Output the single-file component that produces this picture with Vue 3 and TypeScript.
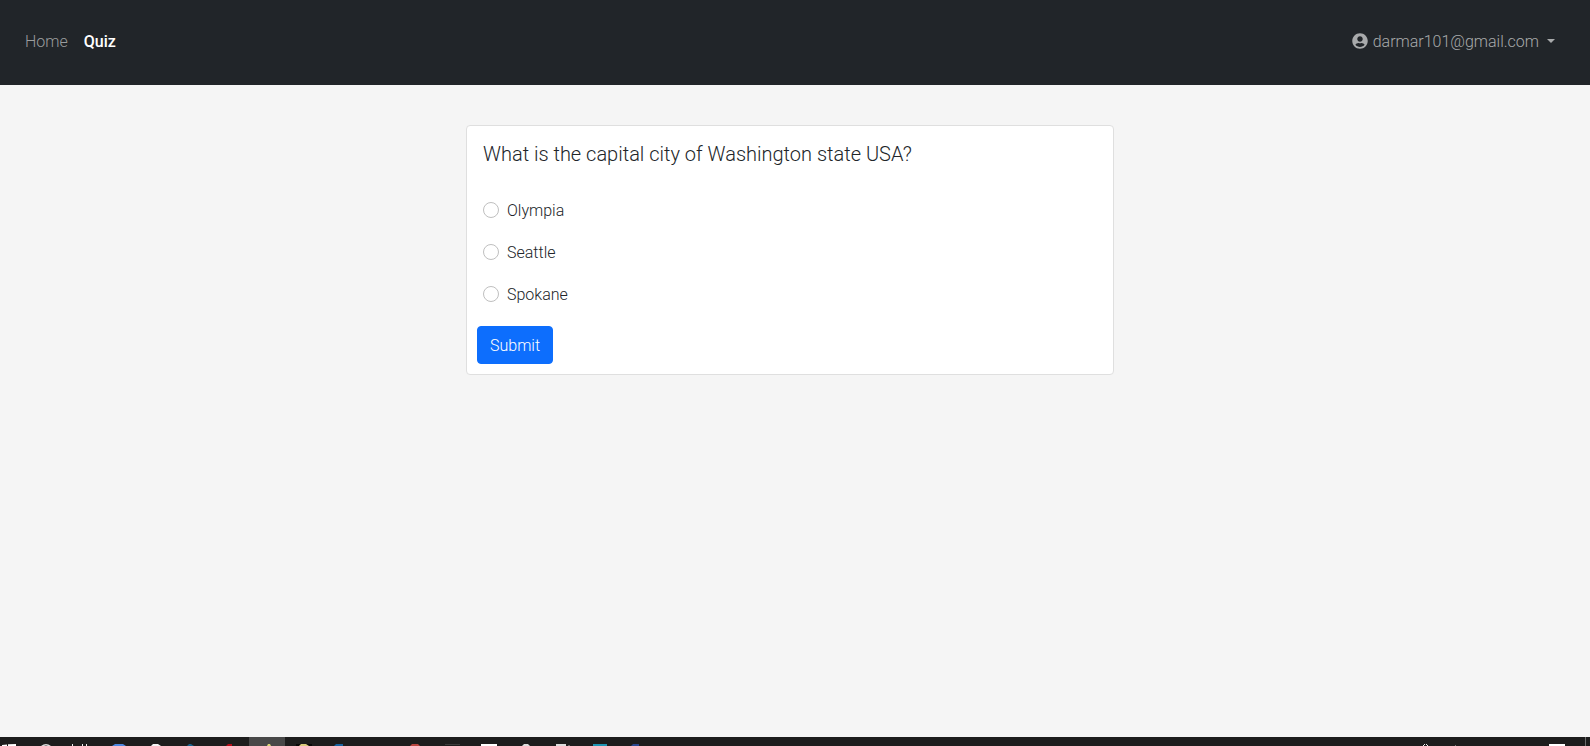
<script setup lang="ts">
import { ref } from 'vue'

interface Choice {
  id: string
  label: string
}

const question = 'What is the capital city of Washington state USA?'
const choices: Choice[] = [
  { id: 'olympia', label: 'Olympia' },
  { id: 'seattle', label: 'Seattle' },
  { id: 'spokane', label: 'Spokane' },
]
const selected = ref<string>('')
</script>

<template>
  <div class="page">
    <header class="navbar">
      <nav class="links">
        <a class="link" href="#home">Home</a>
        <a class="link active" href="#quiz" aria-current="page">Quiz</a>
      </nav>
      <button class="account" type="button" aria-haspopup="true">
        <svg class="avatar" viewBox="0 0 496 512" aria-hidden="true">
          <path
            fill="currentColor"
            d="M248 8C111 8 0 119 0 256s111 248 248 248 248-111 248-248S385 8 248 8zm0 96c48.600 0 88 39.400 88 88s-39.400 88-88 88-88-39.400-88-88 39.400-88 88-88zm0 344c-58.700 0-111.300-26.600-146.500-68.200 18.800-35.400 55.600-59.800 98.500-59.800 2.400 0 4.800.4 7.100 1.100 13 4.200 26.600 6.900 40.900 6.900 14.300 0 28-2.700 40.900-6.900 2.300-.7 4.700-1.100 7.100-1.100 42.900 0 79.700 24.400 98.500 59.800C359.300 421.400 306.700 448 248 448z"
          />
        </svg>
        <span>darmar101@gmail.com</span>
        <span class="caret"></span>
      </button>
    </header>

    <main class="content">
      <form class="card" @submit.prevent>
        <h1 class="question">{{ question }}</h1>
        <div class="choices" role="radiogroup" :aria-label="question">
          <div v-for="choice in choices" :key="choice.id" class="choice">
            <input :id="choice.id" v-model="selected" type="radio" name="answer" :value="choice.id" />
            <label :for="choice.id">{{ choice.label }}</label>
          </div>
        </div>
        <button class="submit" type="submit">Submit</button>
      </form>
    </main>

    <footer class="taskbar" aria-hidden="true">
      <svg width="660" height="9" viewBox="0 0 660 9">
        <rect x="249" width="36" height="9" fill="#484848" />
        <path d="M2 8l5-.6V9H2zM8 7.300L16 7v2H8z" fill="#fff" />
        <path d="M41 10q5-4.500 10 0" fill="none" stroke="#ddd" stroke-width="1.500" />
        <path d="M72 7h1v2h-1zM82 7h1v2h-1zM86 7h1v2h-1z" fill="#eee" />
        <path d="M112 9l3-2h8l3 2z" fill="#4b86e0" />
        <path d="M151 9l2-2h5l3 2z" fill="#f4f4f4" />
        <path d="M187 9l2-2h2l3 2z" fill="#17628c" />
        <path d="M226 9l2-2h4v2z" fill="#b50d18" />
        <path d="M267 9l1-2h2l1 2z" fill="#dbd579" />
        <path d="M296 7h16v2h-16z" fill="#080808" />
        <path d="M299 9l2-2h5l3 2z" fill="#d9ca7b" />
        <path d="M334 9l2-2h7v2z" fill="#17629f" />
        <path d="M410 9l2-2h6l2 2z" fill="#b8443e" />
        <path d="M445 7h15v1h-15z" fill="#3b3b3b" />
        <path d="M481 7h16v2h-16z" fill="#fff" />
        <path d="M522 9l2-2h4l2 2z" fill="#ddd" />
        <path d="M556 7h10v2h-10z" fill="#ddd" />
        <path d="M568 8h2v1h-2z" fill="#666" />
        <path d="M593 7h14v2h-14z" fill="#1e94b3" />
        <path d="M631 9l2-2h6v2z" fill="#29478f" />
      </svg>
      <svg width="170" height="9" viewBox="0 0 170 9">
        <path d="M3 8h1v1H3zM4 7h1v1H4zM6 7h1v1H6zM7 8h1v1H7z" fill="#eee" />
        <path d="M35 8h1v1h-1z" fill="#777" />
        <path d="M129 7h16v2h-16z" fill="#fff" />
        <path d="M165 0h1v9h-1z" fill="#6c6c6c" />
      </svg>
    </footer>
  </div>
</template>

<style>
body {
  margin: 0;
}
</style>

<style scoped>
.page {
  display: flex;
  flex-direction: column;
  box-sizing: border-box;
  min-height: 100vh;
  background: #f5f5f5;
  color: #212529;
  font: 300 16px/24px Roboto, "Liberation Sans", sans-serif;
}

.navbar {
  display: flex;
  align-items: center;
  justify-content: space-between;
  box-sizing: border-box;
  min-height: 85px;
  padding: 20px 35px 22px 25px;
  background: #212529;
}

.links {
  display: flex;
  gap: 16px;
}

.link {
  color: #9b9d9e;
  text-decoration: none;
}

.link.active {
  color: #fff;
  font-weight: 500;
}

.account {
  display: flex;
  align-items: center;
  gap: 5px;
  padding: 0;
  border: 0;
  background: none;
  color: #a8aaab;
  font: inherit;
  cursor: pointer;
}

.avatar {
  width: 16px;
  height: 16px;
  margin-bottom: 2px;
}

.caret {
  margin: 0 0 2px 3px;
  border: 4px solid transparent;
  border-top-color: currentColor;
  border-bottom: 0;
}

.content {
  flex: 1;
  padding: 40px 10px 40px 0;
}

.card {
  box-sizing: border-box;
  width: 100%;
  max-width: 648px;
  margin: 0 auto;
  padding: 16px 10px 10px;
  border: 1px solid #dfdfdf;
  border-radius: 4px;
  background: #fff;
}

.question {
  margin: 0 6px 33px;
  font-size: 20px;
  font-weight: 300;
  line-height: 24px;
}

.choices {
  display: flex;
  flex-direction: column;
  gap: 18px;
  margin: 0 6px 19px;
}

.choice {
  display: flex;
  align-items: flex-start;
  gap: 8px;
}

.choice input {
  appearance: none;
  box-sizing: border-box;
  width: 16px;
  height: 16px;
  margin: 3px 0 0;
  border: 1px solid #bfbfbf;
  border-radius: 50%;
  background: #fff;
}

.choice input:checked {
  border: 5px solid #0d6efd;
}

.submit {
  display: block;
  padding: 7px 12px 5px;
  border: 1px solid #0d6efd;
  border-radius: 4px;
  background: #0d6efd;
  color: #fff;
  font: inherit;
  cursor: pointer;
}

.taskbar {
  display: flex;
  justify-content: space-between;
  height: 9px;
  overflow: hidden;
  background: #1d1d1d;
}
</style>
